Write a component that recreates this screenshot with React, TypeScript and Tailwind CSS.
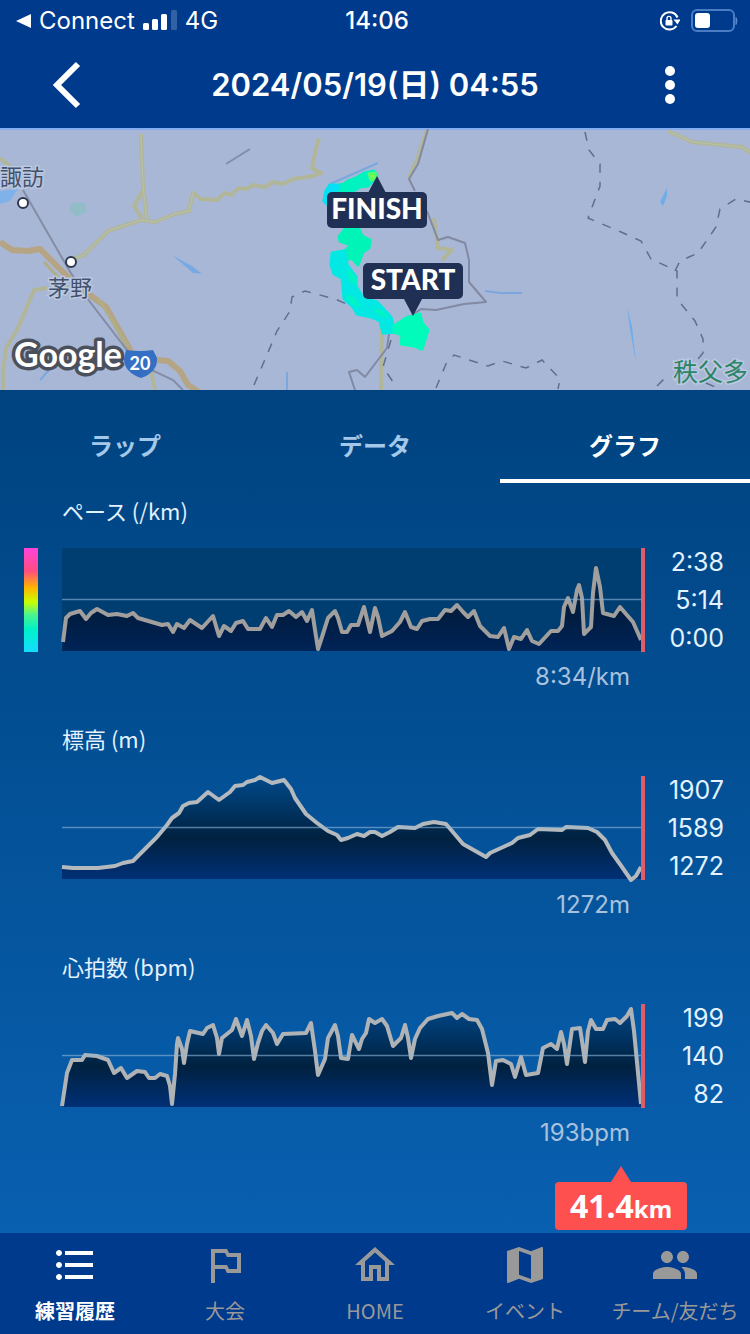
import React, { useState } from "react";
import {
  MdFormatListBulleted,
  MdOutlinedFlag,
  MdOutlineHome,
  MdMap,
  MdPeople,
} from "react-icons/md";

interface Metric {
  id: string;
  title: string;
  value: string;
  scale: string[];
  points: string;
  stroke: string;
  fill: string[];
  pace?: boolean;
}

const metrics: Metric[] = [
  {
    id: "pace",
    title: "ペース (/km)",
    value: "8:34/km",
    scale: ["2:38", "5:14", "0:00"],
    stroke: "#a09f9d",
    fill: ["#003a70", "#001b3c", "#002459"],
    pace: true,
    points:
      "1,94 4,70 8,66 18,63 24,71 29,65 35,61 46,67 55,66 65,68 71,65 76,70 100,77 106,76 111,84 115,76 122,80 128,72 140,80 151,68 157,88 162,78 169,83 174,75 181,73 186,81 198,81 204,70 210,79 215,67 221,67 227,63 234,69 240,64 245,73 250,62 253,82 256,101 260,89 266,70 273,63 276,70 280,84 285,84 289,77 296,77 302,59 308,84 313,60 316,69 320,88 330,83 338,74 343,64 349,79 355,81 360,73 368,71 376,71 383,62 389,63 395,57 401,64 406,69 412,63 418,78 428,88 436,89 442,80 447,101 452,89 459,91 465,82 470,93 477,96 489,83 496,83 500,78 502,59 506,50 511,64 515,42 517,37 520,50 522,86 529,79 531,45 534,20 538,39 541,65 552,68 558,59 564,66 571,74 579,92",
  },
  {
    id: "elevation",
    title: "標高 (m)",
    value: "1272m",
    scale: ["1907", "1589", "1272"],
    stroke: "#b4b9be",
    fill: ["#004a8c", "#00213f", "#003078"],
    points:
      "0,91 11,92 36,92 53,90 61,87 71,85 85,71 95,61 105,49 110,42 117,37 121,30 127,27 135,26 146,16 157,24 168,16 173,10 181,9 185,6 193,4 198,1 210,7 222,4 229,13 233,22 244,38 255,47 266,55 275,59 279,64 286,62 295,58 302,60 308,56 313,56 320,60 328,56 336,51 353,52 361,48 372,46 384,48 390,55 401,68 424,81 428,77 450,67 456,62 468,59 476,53 500,54 504,51 526,52 535,56 543,64 550,77 560,91 569,104 574,100 579,91",
  },
  {
    id: "heart",
    title: "心拍数 (bpm)",
    value: "193bpm",
    scale: ["199", "140", "82"],
    stroke: "#b0b3b6",
    fill: ["#00498c", "#00213f", "#003078"],
    points:
      "0,102 5,69 10,56 20,56 23,51 35,52 46,56 52,69 59,64 65,74 75,67 83,68 87,74 93,74 98,70 105,72 108,82 110,100 113,70 115,40 116,34 120,45 122,59 125,40 128,27 141,30 145,24 151,21 155,34 157,50 160,34 170,26 174,15 180,32 185,16 189,32 192,55 196,39 200,27 204,21 211,29 215,40 221,30 244,29 249,19 253,47 256,71 263,55 266,34 273,21 276,32 279,54 286,55 290,31 297,45 300,35 304,29 307,15 313,19 320,15 325,22 331,42 339,34 343,21 346,34 349,54 353,35 358,24 366,15 376,12 390,9 395,14 400,10 407,15 415,16 420,25 426,49 430,81 434,57 441,56 449,60 453,73 459,53 464,71 476,69 481,44 489,40 495,45 499,28 502,40 505,60 510,25 518,24 520,37 523,58 526,27 529,16 534,25 541,25 545,16 553,15 558,19 565,12 569,5 572,27 579,100",
  },
];

const tabs = ["ラップ", "データ", "グラフ"];

const navItems = [
  { label: "練習履歴", icon: MdFormatListBulleted },
  { label: "大会", icon: MdOutlinedFlag },
  { label: "HOME", icon: MdOutlineHome },
  { label: "イベント", icon: MdMap },
  { label: "チーム/友だち", icon: MdPeople },
];

const StatusBar = () => (
  <div className="grid h-[42px] grid-cols-3 items-center pl-4 pr-3 font-['Inter',sans-serif] text-2xl leading-8">
    <div className="flex items-center gap-[7px]">
      <svg className="h-4 w-4" viewBox="0 0 16 16" fill="#fff">
        <path d="M15 1v14L0 8z" />
      </svg>
      <span>Connect</span>
      <svg className="h-6 w-9" viewBox="0 0 36 24" fill="#fff">
        <rect x="1" y="14" width="6" height="7" rx="1.5" />
        <rect x="10" y="10" width="6" height="11" rx="1.5" />
        <rect x="19" y="5" width="6" height="16" rx="1.5" />
        <rect x="29" y="1" width="6" height="20" rx="1.5" opacity=".2" />
      </svg>
      <span>4G</span>
    </div>
    <div className="text-center font-medium">14:06</div>
    <div className="flex items-center justify-end gap-2.5">
      <svg className="h-5 w-5" viewBox="0 0 20 20" fill="none">
        <path d="M17.500 6.500A8.700 8.700 0 1 0 16.500 15" stroke="#fff" strokeWidth="2" />
        <path d="M13.500 8.500h7l-3 5z" fill="#fff" />
        <rect x="5.500" y="9" width="7" height="5.500" rx="1" fill="#fff" />
        <path d="M7 9V7.400a2 2 0 0 1 4 0V9" stroke="#fff" strokeWidth="1.4" />
      </svg>
      <svg className="h-6 w-12" viewBox="0 0 48 24" fill="none">
        <rect x="2" y="1" width="42" height="21" rx="5" stroke="#4a7cc4" strokeWidth="2" />
        <rect x="5" y="4" width="15" height="15" rx="3" fill="#fff" />
        <path d="M46 8.500q2 3 0 7z" fill="#5f8ccb" stroke="#5f8ccb" />
      </svg>
    </div>
  </div>
);

const RouteMap = () => (
  <svg
    className="block h-[262px] w-full bg-[#a9b7d6]"
    viewBox="0 0 750 262"
    preserveAspectRatio="xMidYMid slice"
    fill="none"
  >
    <path d="M0 1H750" stroke="#84adf0" strokeWidth="2" />
    {/* water and parks */}
    <path d="M0 63l18-2-8 12-10 3z" fill="#7fb2ea" />
    <path d="M72 75l12-1 3 9-10 6-8-6z" fill="#92bcc8" />
    <path d="M172 127l20 11 10 8-9-1z" fill="#78a9e2" />
    <path d="M667 60l-7 14 3 4 4-10zM627 180l5 18 4 37-6-34z" fill="#6fadea" />
    <path d="M485 163l15 2 22 0M287 262v-18M330 56l48-21M40 252l9-10" stroke="#7ba7de" strokeWidth="2" />
    {/* local roads */}
    <g stroke="#b2b698" strokeWidth="4" strokeLinejoin="round">
      <path d="M141 6l2 52 4 35M143 62l-9 16 8 12M65 134l19-7 24-24 33-11 14 2 20-8 14-3 4-18 8 6 16 1 8-7 6 2 8-7 8 1 6-4 12 2 8-5 10 2 10-5 20-3 8-3-9-5 4-20 3-10" />
      <path d="M427 2l-10 30-8 18M434 90l4 30 14 2-10 10M48 160l-14 2-16 38-12 20-3 24v20M382 200l-1 62M150 240l5 22" />
      <path d="M668 3l24 11 50 5 14 9M0 30l10 8" />
    </g>
    <g stroke="#b7c3ac" strokeWidth="1">
      <path d="M141 6l2 52 4 35M65 134l19-7 24-24 33-11 14 2 20-8 14-3 4-18M668 3l24 11 50 5 14 9" />
    </g>
    {/* route 20 */}
    <path d="M0 114l12 8 16 1 12-2 34 34 32 24 26 46 14 6 22 2 12 10 8 14 20 13" stroke="#b5a584" strokeWidth="6" />
    <path d="M44 134l24 26M98 170l30 48" stroke="#b0ae86" strokeWidth="3" />
    {/* rail lines */}
    <path d="M23 62l46 80 18 28 40 52 16 16 30 14 10 10M226 36l24-15" stroke="#848da6" strokeWidth="2" />
    {/* prefecture borders */}
    <g stroke="#8189a3" strokeWidth="2" strokeLinejoin="round">
      <path d="M428 1l-10 35-9 15 6 12M427 83l11 29 10-3 17 6 4 17 0 22 17 20-22 2-28 6-15-1-12 8M389 206l-2 14-22 29-8-7-8 2 6 18" />
    </g>
    <g stroke="#626d8c" strokeWidth="1.5" strokeDasharray="9 9">
      <path d="M254 257l18-42 5-12 13-20 2-14 13-6 30 8 46 20M391 212l-8 27 14 21M436 260l10-24 8-9 34 11 14-5 24 7 16-8 18 19-2 10" />
      <path d="M585 4l4 18 11 14 0 22-12 32 33 14 20 9 10 18 26 12 0 28 18 22 8 18 0 14-12 14M675 143l5-10 18-8 18-26 4-18 16-10 18 4M657 258l10-10M706 255l18 8h24" />
    </g>
    {/* pace coloured track */}
    <g strokeLinejoin="round" strokeWidth="3">
      <path
        d="M324 73l2-10 4-6 9 0 5-1 4-3 8-3 8-5 10-2 3 5-9 10-8 1-10 6-14 2-8 8z"
        fill="#00f2c0"
        stroke="#00f2c0"
      />
      <path d="M324 73l2-10 4-6 9 1-6 10-6 8z" fill="#06e0f6" stroke="#06e0f6" />
      <path d="M369 46l6-1 1 5-5 2z" fill="#8cfa3c" stroke="#5cfa68" />
      <path
        d="M339 109l6-8 14 0 3 7 8 4-1 8-6 4-5 13-7-8-7 6-11-4 0-6 12-2 6-6-11-4z"
        fill="#00f4b8"
        stroke="#00f4b8"
      />
      <path
        d="M332 125l13-2 2 14 9 12 0 9 7 12 14 4 14 15 2 8 6 7-16 1-3-12-9-4-14-3-4-7-9-8-2-21-8-4-3-9z"
        fill="#04e8e4"
        stroke="#04e8e4"
      />
      <path d="M347 140l9 9 1 8-8-4zM345 166l10 4 6 10-10-4zM372 180l10 2 8 8-10-2z" fill="#00f4c4" />
      <path
        d="M394 198l12-8 14-4 2 9 6 7-6 19-8-3-13-2 1-9-8-3z"
        fill="#00fbba"
        stroke="#00fbba"
      />
    </g>
    <g stroke="#2c3850" strokeWidth="2" fill="#fff">
      <circle cx="23" cy="75" r="5" />
      <circle cx="71" cy="134" r="5" />
    </g>
    <g
      className="font-['Noto_Sans_CJK_JP',sans-serif] text-[22px]"
      fill="#42526e"
      stroke="#bcc8e0"
      strokeWidth="3"
      paintOrder="stroke"
    >
      <text x="0" y="57">諏訪</text>
      <text x="48" y="168">茅野</text>
      <text className="text-[25px]" x="673" y="253" fill="#2c8467">秩父多</text>
    </g>
    <path d="M126 222q14 2 27 0l4 8q1 14-16 20-17-6-17-19z" fill="#356fc4" />
    <text className="font-['Lato',sans-serif] text-lg font-bold" x="140" y="242" fill="#fff" textAnchor="middle">
      20
    </text>
    <text
      className="font-['Lato',sans-serif] text-[34px] font-bold"
      x="14"
      y="239"
      fill="#fff"
      stroke="#4a505c"
      strokeWidth="7"
      strokeLinejoin="round"
      paintOrder="stroke"
    >
      Google
    </text>
    <g fill="#202f54">
      <path d="M377 48l9 17h-18zM413 188l9-17h-18z" />
      <rect x="327" y="64" width="100" height="36" rx="5" />
      <rect x="363" y="135" width="100" height="36" rx="5" />
    </g>
    <g className="font-['Lato',sans-serif] text-[28px] font-black" fill="#fff" textAnchor="middle">
      <text x="377" y="91">FINISH</text>
      <text x="413" y="162">START</text>
    </g>
  </svg>
);

const MetricChart = ({ metric }: { metric: Metric }) => (
  <section className="mb-[29px] flex flex-col">
    <h2 className="ml-[62px] text-[22px] leading-8 text-[#e2f2ff]">{metric.title}</h2>
    <div className="mt-[22px] flex h-[104px] pl-6 pr-[26px]">
      <div className="mr-6 w-[14px]">
        {metric.pace && (
          <div className="h-full bg-[linear-gradient(#ff44dc,#ff4d80_22%,#ffb400_38%,#c8ff00_52%,#4cf58c_64%,#00f2c8_78%,#14dcff)]" />
        )}
      </div>
      <svg className="h-full min-w-0 flex-1 overflow-visible" viewBox="0 0 584 104" preserveAspectRatio="none" fill="none">
        <defs>
          <linearGradient id={`${metric.id}-fill`} gradientUnits="userSpaceOnUse" x1="0" y1="0" x2="0" y2="104">
            <stop offset="0" stopColor={metric.fill[0]} />
            <stop offset=".6" stopColor={metric.fill[1]} />
            <stop offset="1" stopColor={metric.fill[2]} />
          </linearGradient>
        </defs>
        {metric.pace && <rect width="580" height="103" fill="#003e72" />}
        <polygon points={`0,103 ${metric.points} 580,103`} fill={`url(#${metric.id}-fill)`} />
        <polyline points={metric.points} stroke={metric.stroke} strokeWidth="4" strokeLinejoin="round" />
        <path d="M0 51.500H580" stroke="#8fb8d8" strokeOpacity=".6" strokeWidth="1.5" />
        <path d="M581 0V104" stroke="#e05c66" strokeWidth="4" />
      </svg>
      <div className="flex w-[78px] flex-col justify-between text-right font-['Inter',sans-serif] text-[25px] leading-7 text-[#e2f2ff]">
        {metric.scale.map((tick) => (
          <span key={tick}>{tick}</span>
        ))}
      </div>
    </div>
    <p className="mr-[120px] mt-[9px] text-right font-['Inter',sans-serif] text-2xl leading-8 text-[#a8c2de]">
      {metric.value}
    </p>
  </section>
);

const App = () => {
  const [activeTab, setActiveTab] = useState("グラフ");
  const [activeNav, setActiveNav] = useState("練習履歴");

  return (
    <div className="flex min-h-screen flex-col bg-[#003a8c] font-['Noto_Sans_CJK_JP',sans-serif] text-white">
      <header>
        <StatusBar />
        <div className="flex h-[86px] items-center justify-between px-10">
          <button aria-label="戻る" className="flex h-14 w-20 items-center pl-3">
            <svg className="h-12 w-8" viewBox="0 0 32 48" fill="none">
              <path d="M26 3L5 24L26 45" stroke="#fff" strokeWidth="6" />
            </svg>
          </button>
          <h1 className="font-['Inter','Noto_Sans_CJK_JP',sans-serif] text-[31px] font-semibold leading-10">
            2024/05/19(日) 04:55
          </h1>
          <button aria-label="メニュー" className="flex h-14 w-20 items-center justify-center">
            <svg className="h-10 w-3" viewBox="0 0 12 40" fill="#fff">
              <circle cx="6" cy="6" r="5" />
              <circle cx="6" cy="20" r="5" />
              <circle cx="6" cy="34" r="5" />
            </svg>
          </button>
        </div>
      </header>

      <RouteMap />

      <main className="flex-1 bg-linear-to-b from-[#004380] to-[#0960b0]">
        <div role="tablist" className="grid h-[93px] grid-cols-3">
          {tabs.map((tab) => (
            <button
              key={tab}
              role="tab"
              aria-selected={activeTab === tab}
              onClick={() => setActiveTab(tab)}
              className={`border-b-4 pt-5 text-2xl font-bold ${
                activeTab === tab ? "border-white text-white" : "border-transparent text-[#a4c8ea]"
              }`}
            >
              {tab}
            </button>
          ))}
        </div>

        <div className="pt-[11px]">
          {metrics.map((metric) => (
            <MetricChart key={metric.id} metric={metric} />
          ))}
        </div>

        {/* distance marker */}
        <div className="-mt-3 mr-[63px] flex flex-col items-end pb-[3px]">
          <div className="flex w-[132px] flex-col items-center">
            <svg className="h-4 w-5" viewBox="0 0 20 16" fill="#ff5050">
              <path d="M10 0l10 16H0z" />
            </svg>
            <div className="h-12 w-full rounded-sm bg-[#ff5050] text-center font-['Noto_Sans',sans-serif] text-[32px] font-bold leading-[48px]">
              41.4<span className="text-2xl">km</span>
            </div>
          </div>
        </div>
      </main>

      <nav className="grid grid-cols-5 pb-[9px] pt-2">
        {navItems.map(({ label, icon: Icon }) => (
          <button
            key={label}
            onClick={() => setActiveNav(label)}
            className={`flex flex-col items-center gap-2 ${
              activeNav === label ? "font-bold text-white" : "text-[#999]"
            }`}
          >
            <Icon size={48} />
            <span className="whitespace-nowrap text-xl leading-7">{label}</span>
          </button>
        ))}
      </nav>
    </div>
  );
};

export default App;
